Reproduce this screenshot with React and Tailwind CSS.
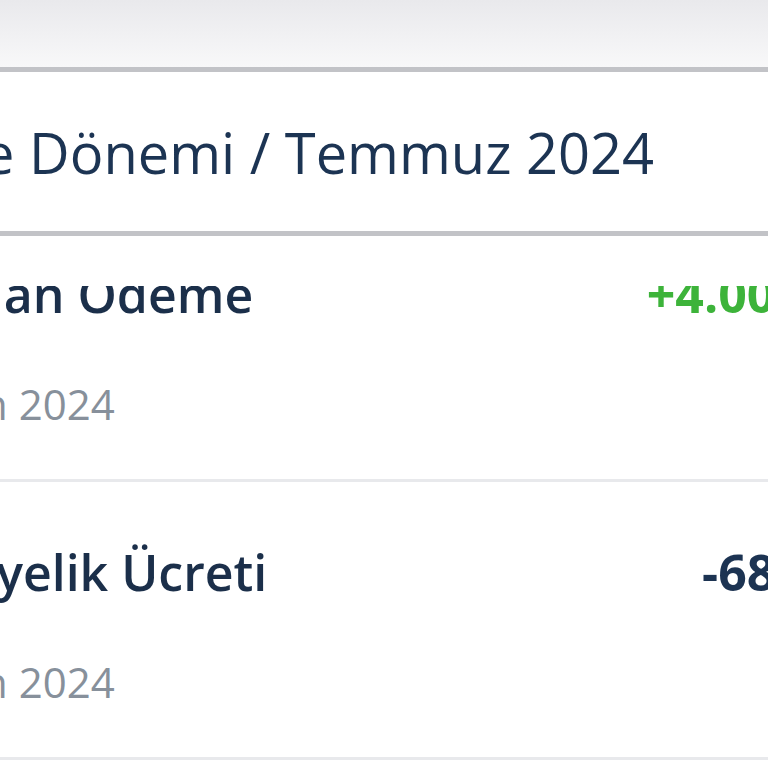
import React from "react";

const rows = [
  { id: 1, title: "Plan Ödeme", date: "1 Haziran 2024", amount: "+4.000,00 ₺", positive: true },
  { id: 2, title: "Üyelik Ücreti", date: "1 Haziran 2024", amount: "-680,00 ₺", positive: false },
];

function Row({ title, date, amount, positive }) {
  return (
    <div className="h-[278px] border-b-[3px] border-[#e8e9ec] pl-[39px] pr-[38px] pt-[65px]">
      <div className="flex items-baseline justify-between">
        <span className="text-[50px] leading-none font-semibold text-[#1b2f4a] whitespace-nowrap">
          {title}
        </span>
        <span
          className={`text-[50px] leading-none font-bold whitespace-nowrap ${
            positive ? "text-[#3db33a]" : "text-[#1c3352]"
          }`}
        >
          {amount}
        </span>
      </div>
      <div className="mt-[64px] ml-[-137px] text-[42px] leading-none text-[#87909b] whitespace-nowrap">
        {date}
      </div>
    </div>
  );
}

export default function App() {
  return (
    <div className="w-[768px] h-[768px] overflow-hidden bg-white font-['Open_Sans','Noto_Sans',sans-serif]">
      <div className="ml-[-80px] w-[1035px]">
        {/* status / nav strip */}
        <div className="h-[72px] bg-gradient-to-b from-[#e9e9ec] to-[#f8f8f9] border-b-[5px] border-[#c2c3c7]" />

        {/* period header */}
        <div className="h-[164px] flex items-center border-b-[5px] border-[#c2c3c7] px-[38px]">
          <h2 className="ml-[-136px] text-[56px] leading-none font-medium text-[#1c3453] whitespace-nowrap">
            Ödeme Dönemi / Temmuz 2024
          </h2>
        </div>
        <div className="h-[50px] bg-white" />

        {/* transactions */}
        <div className="h-[482px] overflow-hidden">
          <div className="mt-[-82px]">
            {rows.map((r) => (
              <Row key={r.id} {...r} />
            ))}
          </div>
        </div>
      </div>
    </div>
  );
}
